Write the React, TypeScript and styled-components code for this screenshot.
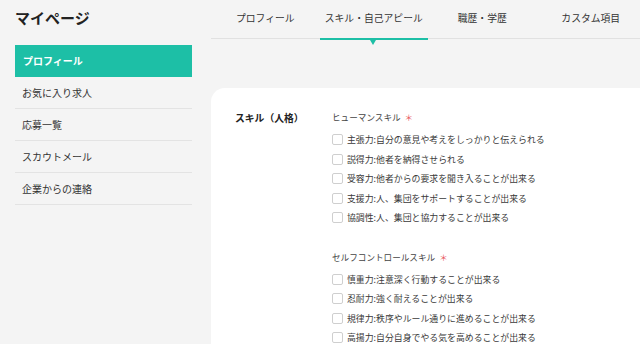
import React from 'react';
import styled, { createGlobalStyle } from 'styled-components';

const GlobalStyle = createGlobalStyle`
  html, body {
    margin: 0;
    padding: 0;
    background: #f4f4f4;
    font-family: 'Noto Sans CJK JP', 'Noto Sans', sans-serif;
    color: #333;
    overflow: hidden;
  }
  * { box-sizing: border-box; }
`;

const TEAL = '#1dbfa6';

const Page = styled.div`
  display: grid;
  grid-template-columns: 177px 1fr;
  column-gap: 19px;
  padding-left: 15px;
  width: 640px;
  height: 344px;
  overflow: hidden;
`;

const Sidebar = styled.aside`
  display: flex;
  flex-direction: column;
`;

const Title = styled.h1`
  margin: 0;
  height: 45px;
  padding-top: 7px;
  font-size: 15px;
  font-weight: 700;
  line-height: 22px;
  color: #222;
`;

const MenuItem = styled.div<{ active?: boolean }>`
  height: 32px;
  display: flex;
  align-items: center;
  padding-left: ${({ active }) => (active ? '8px' : '7px')};
  font-size: 10px;
  font-weight: ${({ active }) => (active ? 700 : 400)};
  color: ${({ active }) => (active ? '#fff' : '#333')};
  background: ${({ active }) => (active ? TEAL : 'transparent')};
  border-bottom: 1px solid ${({ active }) => (active ? TEAL : '#e3e3e3')};
`;

const Main = styled.main`
  display: flex;
  flex-direction: column;
  min-width: 0;
`;

const Tabs = styled.nav`
  display: flex;
  height: 39px;
  border-bottom: 1.5px solid #e1e1e1;
  width: 440px;
`;

const Tab = styled.div<{ active?: boolean }>`
  position: relative;
  flex: none;
  width: 108.5px;
  display: flex;
  align-items: center;
  justify-content: center;
  padding-bottom: 3px;
  font-size: 9.8px;
  color: #333;
  ${({ active }) =>
    active &&
    `
    &::after {
      content: '';
      position: absolute;
      left: 0;
      right: 0;
      bottom: -1.5px;
      height: 2px;
      background: ${TEAL};
    }
    &::before {
      content: '';
      position: absolute;
      left: 50%;
      bottom: -7px;
      margin-left: -3.5px;
      border-left: 3.5px solid transparent;
      border-right: 3.5px solid transparent;
      border-top: 5px solid ${TEAL};
    }
  `}
`;

const Card = styled.section`
  margin-top: 49px;
  flex: 1;
  background: #fff;
  border-top-left-radius: 14px;
  padding: 20px 0 0 24px;
  display: grid;
  grid-template-columns: 97px 1fr;
`;

const SectionTitle = styled.div`
  font-size: 9.8px;
  font-weight: 700;
  line-height: 20px;
  color: #222;
`;

const Groups = styled.div`
  display: flex;
  flex-direction: column;
  gap: 20px;
`;

const Group = styled.div`
  display: flex;
  flex-direction: column;
`;

const GroupLabel = styled.div`
  font-size: 8.6px;
  line-height: 18px;
  margin-bottom: 4px;
  color: #444;
`;

const Required = styled.span`
  color: #e8545a;
  margin-left: 4px;
`;

const Option = styled.label`
  display: flex;
  align-items: center;
  height: 19.5px;
  font-size: 8.9px;
  color: #3a3a3a;
  white-space: nowrap;
`;

const Box = styled.span`
  width: 11px;
  height: 11px;
  border: 1px solid #cfcfcf;
  border-radius: 2px;
  background: #fff;
  margin-right: 4px;
  flex: none;
`;

const menu = ['プロフィール', 'お気に入り求人', '応募一覧', 'スカウトメール', '企業からの連絡'];
const tabs = ['プロフィール', 'スキル・自己アピール', '職歴・学歴', 'カスタム項目'];

const groups = [
  {
    label: 'ヒューマンスキル',
    items: [
      '主張力:自分の意見や考えをしっかりと伝えられる',
      '説得力:他者を納得させられる',
      '受容力:他者からの要求を聞き入ることが出来る',
      '支援力:人、集団をサポートすることが出来る',
      '協調性:人、集団と協力することが出来る',
    ],
  },
  {
    label: 'セルフコントロールスキル',
    items: [
      '慎重力:注意深く行動することが出来る',
      '忍耐力:強く耐えることが出来る',
      '規律力:秩序やルール通りに進めることが出来る',
      '高揚力:自分自身でやる気を高めることが出来る',
    ],
  },
];

export default function App() {
  return (
    <>
      <GlobalStyle />
      <Page>
        <Sidebar>
          <Title>マイページ</Title>
          {menu.map((m, i) => (
            <MenuItem key={m} active={i === 0}>
              {m}
            </MenuItem>
          ))}
        </Sidebar>
        <Main>
          <Tabs>
            {tabs.map((t, i) => (
              <Tab key={t} active={i === 1}>
                {t}
              </Tab>
            ))}
          </Tabs>
          <Card>
            <SectionTitle>スキル（人格）</SectionTitle>
            <Groups>
              {groups.map((g) => (
                <Group key={g.label}>
                  <GroupLabel>
                    {g.label}
                    <Required>＊</Required>
                  </GroupLabel>
                  {g.items.map((it) => (
                    <Option key={it}>
                      <Box />
                      {it}
                    </Option>
                  ))}
                </Group>
              ))}
            </Groups>
          </Card>
        </Main>
      </Page>
    </>
  );
}
